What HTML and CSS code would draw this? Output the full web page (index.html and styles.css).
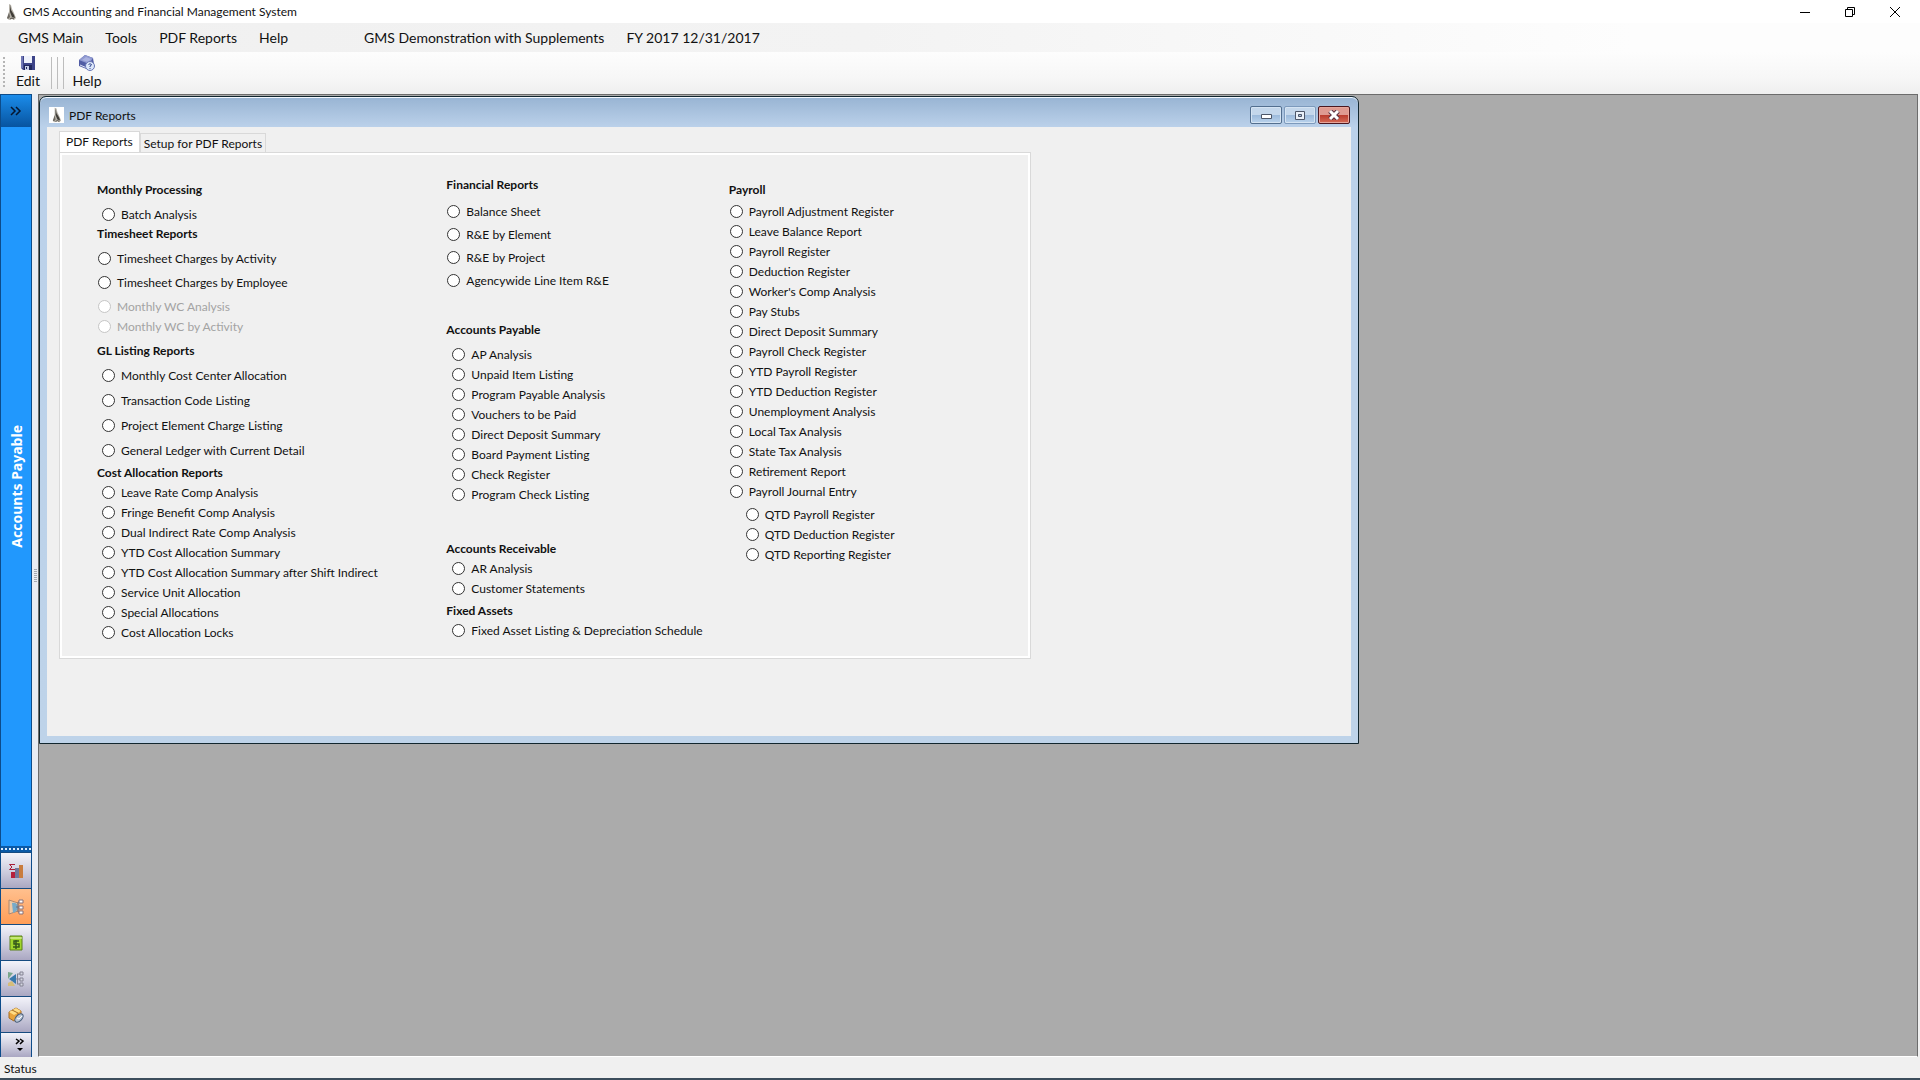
FILE: index.html
```html
<!DOCTYPE html>
<html lang="en">
<head>
  <meta charset="utf-8">
  <title>GMS Accounting and Financial Management System</title>
  <link rel="stylesheet" href="styles.css">
</head>
<body>
  <svg class="defs" width="0" height="0" aria-hidden="true">
    <symbol id="logo" viewBox="0 0 12 16">
      <path d="M4 0l2 1 1 4 2 4 2 5-2 2-2-1-3 1-2-2 2-3 0-5z" fill="#b5b1a8"/>
      <path d="M5 1l1 5 3 5 1 3-3-1-2-5z" fill="#3f3c37"/>
      <path d="M4 8l1 5-2 2-1-1z" fill="#6d6961"/>
      <path d="M5 15l2-1 2 1" stroke="#55514a" fill="none"/>
    </symbol>
  </svg>

  <header class="titlebar">
    <svg class="logo"><use href="#logo"/></svg>
    <h1>GMS Accounting and Financial Management System</h1>
    <div class="window-controls">
      <button type="button" aria-label="Minimize"><svg width="12" height="12"><path d="M1 6.500h10" stroke="#000" fill="none"/></svg></button>
      <button type="button" aria-label="Restore"><svg width="12" height="12"><path d="M1.500 3.500h7v7h-7zM3.500 3.500v-2h7v7h-2" stroke="#000" fill="none"/></svg></button>
      <button type="button" aria-label="Close"><svg width="12" height="12"><path d="M1 1l10 10M11 1L1 11" stroke="#000" fill="none"/></svg></button>
    </div>
  </header>

  <nav class="menubar">
    <button type="button">GMS Main</button>
    <button type="button">Tools</button>
    <button type="button">PDF Reports</button>
    <button type="button">Help</button>
    <span class="company">GMS Demonstration with Supplements</span>
    <span>FY 2017 12/31/2017</span>
  </nav>

  <div class="toolbar">
    <span class="grip"></span>
    <button type="button" class="tool">
      <svg width="16" height="16">
        <path d="M1 1h14v14H3l-2-2z" fill="#3d4489"/>
        <path d="M1 1h2v12H1z" fill="#7077b5"/>
        <path d="M4 1h8v7H4z" fill="#eef1fb"/>
        <path d="M4 10h8v5H4z" fill="#20275c"/>
        <path d="M5 11h4v4H5z" fill="#c8cfe9"/>
        <path d="M6 12h1v2H6z" fill="#20275c"/>
      </svg>
      Edit
    </button>
    <span class="sep"></span><span class="sep"></span><span class="sep"></span>
    <button type="button" class="tool">
      <svg width="18" height="16">
        <path d="M1 5l6-5 8 3 1 6-5 6-10-4z" fill="#515da5"/>
        <path d="M1 5l6-5 8 3-4 6z" fill="#8f99d0"/>
        <path d="M4 5l4-3 5 2-3 3z" fill="#aab2e0"/>
        <path d="M2 10l7 3" stroke="#dce1f5" fill="none"/>
        <circle cx="12" cy="11" r="4.500" fill="#dce7fa" stroke="#6876b4"/>
        <path d="M10.500 9.500q1.500-1.500 3 0 0 1-1.500 1.500v1M12 13v1" stroke="#35488f" fill="none"/>
      </svg>
      Help
    </button>
  </div>

  <div class="workspace">
    <aside class="sidebar">
      <button type="button" class="expand" aria-label="Expand"><svg width="12" height="10"><path d="M1 1l4 4-4 4M6 1l4 4-4 4" stroke="#06162f" stroke-width="1.500" fill="none"/></svg></button>
      <div class="module"><span>Accounts Payable</span></div>
      <div class="dots"></div>
      <button type="button" class="nav" aria-label="General Ledger">
        <svg width="16" height="16">
          <path d="M7 1.500H1.500l2.500 2.500-2.500 2.500H7" stroke="#a81c38" fill="none"/>
          <path d="M3 9h4v6H3z" fill="#b5213c"/><path d="M7 5h4v10H7z" fill="#70779a"/><path d="M11 2h4v13h-4z" fill="#c97c3e"/>
        </svg>
      </button>
      <button type="button" class="nav active" aria-label="Accounts Payable">
        <svg width="16" height="16">
          <path d="M1 1l9 3v8l-9 3z" fill="#efc9a5" stroke="#ad8871"/>
          <path d="M4 4q5-1 6 4 0 4-5 6z" fill="#77aac9"/>
          <path d="M8 8h4M10 3v10M10 3h2M10 13h2" stroke="#776f76" fill="none"/>
          <path d="M11 1h4v3h-4zM11 7h4v3h-4zM11 12h4v3h-4z" fill="#fff" stroke="#88727a"/>
        </svg>
      </button>
      <button type="button" class="nav" aria-label="Payroll">
        <svg width="16" height="16">
          <path d="M2 1h12v14H2z" fill="#a1d62d" stroke="#587e1b"/>
          <path d="M2 3h12" stroke="#ecf8bf"/>
          <path d="M11 6H6v3h5v3H5M8 5v9" stroke="#34591b" stroke-width="1.500" fill="none"/>
        </svg>
      </button>
      <button type="button" class="nav" aria-label="Accounts Receivable">
        <svg width="16" height="16">
          <path d="M0 1l5 1-5 6z" fill="#79a68b"/>
          <path d="M1 8l7-5v10z" fill="#3979ad"/>
          <path d="M0 12l4-2 3 5H0z" fill="#d5bd79"/>
          <path d="M8 8h4M9.500 3v10M9 3h3M9 13h3" stroke="#858494" fill="none"/>
          <path d="M12 1h3v3h-3zM12 7h3v3h-3zM12 12h3v3h-3z" fill="#d5d7e2" stroke="#858494"/>
        </svg>
      </button>
      <button type="button" class="nav" aria-label="Fixed Assets">
        <svg width="16" height="16">
          <path d="M1 5l7-4 5 3v6l-7 4-5-3z" fill="#e8a43c" stroke="#a56b22"/>
          <path d="M1 5l5 3 7-4-5-3z" fill="#ffdc84"/>
          <path d="M4 3l6 3v3" stroke="#a56b22" fill="none"/>
          <ellipse cx="11" cy="11" rx="5" ry="3" fill="#b8c5d6" stroke="#465c78" transform="rotate(-45 11 11)"/>
          <path d="M9 11l2 1 3-3" stroke="#fff" fill="none"/>
        </svg>
      </button>
      <button type="button" class="nav more" aria-label="More modules">
        <svg width="10" height="14"><path d="M1 1l3 2-3 3M5 1l3 2-3 3" stroke="#000" stroke-width="1.500" fill="none"/><path d="M2 10h6l-3 3z"/></svg>
      </button>
    </aside>
    <div class="splitter"></div>

    <main class="desktop">
      <section class="child">
        <header class="child-title">
          <svg class="logo"><use href="#logo"/></svg>
          <h2>PDF Reports</h2>
          <div class="child-controls">
            <button type="button" aria-label="Minimize"><svg width="14" height="10"><path d="M2.500 4.500h10v4h-10z" fill="#fff" stroke="#4c5668"/></svg></button>
            <button type="button" class="faded" aria-label="Maximize"><svg width="14" height="10"><path d="M2.500 1.500h9v8h-9z" fill="#e9f0f8" stroke="#4c5668"/><path d="M5.500 4.500h3v2h-3z" fill="#a9c1dc" stroke="#4c5668"/></svg></button>
            <button type="button" class="close" aria-label="Close"><svg width="14" height="10"><path d="M3 1l8 8M11 1L3 9" stroke="#573040" stroke-width="5" fill="none"/><path d="M3 1l8 8M11 1L3 9" stroke="#fff" stroke-width="3" fill="none"/></svg></button>
          </div>
        </header>

        <div class="client">
          <div class="tabs" role="tablist">
            <button type="button" role="tab" class="tab selected" aria-selected="true">PDF Reports</button>
            <button type="button" role="tab" class="tab" aria-selected="false">Setup for PDF Reports</button>
          </div>

          <form class="panel">
            <div class="column">
              <section class="group">
                <h3>Monthly Processing</h3>
                <div class="options inset drop">
                  <label><input type="radio" name="report">Batch Analysis</label>
                </div>
              </section>
              <section class="group">
                <h3>Timesheet Reports</h3>
                <div class="options drop">
                  <div class="options medium">
                    <label><input type="radio" name="report">Timesheet Charges by Activity</label>
                    <label><input type="radio" name="report">Timesheet Charges by Employee</label>
                    <label class="off"><input type="radio" name="report" disabled>Monthly WC Analysis</label>
                  </div>
                  <label class="off"><input type="radio" name="report" disabled>Monthly WC by Activity</label>
                </div>
              </section>
              <section class="group apart">
                <h3>GL Listing Reports</h3>
                <div class="options inset loose drop">
                  <label><input type="radio" name="report">Monthly Cost Center Allocation</label>
                  <label><input type="radio" name="report">Transaction Code Listing</label>
                  <label><input type="radio" name="report">Project Element Charge Listing</label>
                  <label><input type="radio" name="report">General Ledger with Current Detail</label>
                </div>
              </section>
              <section class="group near">
                <h3>Cost Allocation Reports</h3>
                <div class="options inset">
                  <label><input type="radio" name="report">Leave Rate Comp Analysis</label>
                  <label><input type="radio" name="report">Fringe Benefit Comp Analysis</label>
                  <label><input type="radio" name="report">Dual Indirect Rate Comp Analysis</label>
                  <label><input type="radio" name="report">YTD Cost Allocation Summary</label>
                  <label><input type="radio" name="report">YTD Cost Allocation Summary after Shift Indirect</label>
                  <label><input type="radio" name="report">Service Unit Allocation</label>
                  <label><input type="radio" name="report">Special Allocations</label>
                  <label><input type="radio" name="report">Cost Allocation Locks</label>
                </div>
              </section>
            </div>

            <div class="column middle">
              <section class="group">
                <h3>Financial Reports</h3>
                <div class="options tight low">
                  <label><input type="radio" name="report">Balance Sheet</label>
                  <label><input type="radio" name="report">R&amp;E by Element</label>
                  <label><input type="radio" name="report">R&amp;E by Project</label>
                  <label><input type="radio" name="report">Agencywide Line Item R&amp;E</label>
                </div>
              </section>
              <section class="group payable">
                <h3>Accounts Payable</h3>
                <div class="options inset drop">
                  <label><input type="radio" name="report">AP Analysis</label>
                  <label><input type="radio" name="report">Unpaid Item Listing</label>
                  <label><input type="radio" name="report">Program Payable Analysis</label>
                  <label><input type="radio" name="report">Vouchers to be Paid</label>
                  <label><input type="radio" name="report">Direct Deposit Summary</label>
                  <label><input type="radio" name="report">Board Payment Listing</label>
                  <label><input type="radio" name="report">Check Register</label>
                  <label><input type="radio" name="report">Program Check Listing</label>
                </div>
              </section>
              <section class="group receivable">
                <h3>Accounts Receivable</h3>
                <div class="options inset">
                  <label><input type="radio" name="report">AR Analysis</label>
                  <label><input type="radio" name="report">Customer Statements</label>
                </div>
              </section>
              <section class="group near">
                <h3>Fixed Assets</h3>
                <div class="options inset">
                  <label><input type="radio" name="report">Fixed Asset Listing &amp; Depreciation Schedule</label>
                </div>
              </section>
            </div>

            <div class="column">
              <section class="group">
                <h3>Payroll</h3>
                <div class="options near">
                  <label><input type="radio" name="report">Payroll Adjustment Register</label>
                  <label><input type="radio" name="report">Leave Balance Report</label>
                  <label><input type="radio" name="report">Payroll Register</label>
                  <label><input type="radio" name="report">Deduction Register</label>
                  <label><input type="radio" name="report">Worker's Comp Analysis</label>
                  <label><input type="radio" name="report">Pay Stubs</label>
                  <label><input type="radio" name="report">Direct Deposit Summary</label>
                  <label><input type="radio" name="report">Payroll Check Register</label>
                  <label><input type="radio" name="report">YTD Payroll Register</label>
                  <label><input type="radio" name="report">YTD Deduction Register</label>
                  <label><input type="radio" name="report">Unemployment Analysis</label>
                  <label><input type="radio" name="report">Local Tax Analysis</label>
                  <label><input type="radio" name="report">State Tax Analysis</label>
                  <label><input type="radio" name="report">Retirement Report</label>
                  <label><input type="radio" name="report">Payroll Journal Entry</label>
                </div>
                <div class="options quarterly">
                  <label><input type="radio" name="report">QTD Payroll Register</label>
                  <label><input type="radio" name="report">QTD Deduction Register</label>
                  <label><input type="radio" name="report">QTD Reporting Register</label>
                </div>
              </section>
            </div>
          </form>
        </div>
      </section>
    </main>
  </div>

  <footer class="statusbar">Status</footer>
</body>
</html>
```
FILE: styles.css
```css
* {
  box-sizing: border-box;
}

body {
  margin: 0;
  height: 100vh;
  display: flex;
  flex-direction: column;
  overflow: hidden;
  background: #f0f0f0;
  color: #111;
  font-family: Lato, "Open Sans", sans-serif;
  font-size: 12px;
}

h1, h2, h3 {
  margin: 0;
  font-size: inherit;
  font-weight: normal;
}

button {
  margin: 0;
  padding: 0;
  border: 0;
  background: none;
  color: inherit;
  font: inherit;
}

svg {
  display: block;
}

.defs {
  position: absolute;
}

/* Main window */
.titlebar {
  display: flex;
  align-items: center;
  height: 23px;
  padding: 0 13px 0 5px;
  background: #fff;
}

.logo {
  width: 12px;
  height: 16px;
  margin-right: 6px;
}

.window-controls {
  display: flex;
  gap: 21px;
  margin-left: auto;
}

.window-controls button {
  display: grid;
  place-items: center;
  width: 24px;
  height: 20px;
}

.menubar {
  display: flex;
  align-items: center;
  gap: 22px;
  height: 29px;
  padding-left: 18px;
  background: linear-gradient(90deg, #f0f0f0, #f3f3f3 45%, #fdfdfd 85%);
  font-size: 14px;
}

.company {
  margin-left: 54px;
}

.toolbar {
  display: flex;
  align-items: center;
  height: 42px;
  padding-left: 3px;
  background: linear-gradient(#fdfdfd, #f7f7f7 60%, #efefef);
}

.grip {
  width: 2px;
  height: 32px;
  background: repeating-linear-gradient(#b5b5b5 0 2px, transparent 2px 4px);
}

.tool {
  display: flex;
  flex-direction: column;
  align-items: center;
  width: 46px;
  height: 36px;
  font-size: 14px;
  line-height: 20px;
}

.sep {
  width: 1px;
  height: 32px;
  margin-right: 5px;
  background: #bdbdbd;
}

.sep:nth-last-child(2) {
  margin-right: 0;
}

.workspace {
  flex: 1;
  display: flex;
  min-height: 0;
}

/* Module bar */
.sidebar {
  display: flex;
  flex-direction: column;
  width: 32px;
  border: 1px solid #0d4c8a;
  border-width: 1px 1px 0;
}

.expand {
  display: grid;
  place-items: center;
  height: 32px;
  background: linear-gradient(#1b8cea, #0754a0);
}

.module {
  flex: 1;
  display: flex;
  align-items: center;
  justify-content: center;
  background: #2198fd;
  color: #fff;
  font: bold 14px "Noto Sans", sans-serif;
}

.module span {
  writing-mode: vertical-rl;
  transform: rotate(180deg);
}

.dots {
  height: 6px;
  background: repeating-linear-gradient(90deg, #dceeff 0 2px, #0b5aa6 2px 4px) 0 2px / 100% 2px no-repeat #0b5aa6;
}

.nav {
  display: grid;
  place-items: center;
  height: 36px;
  border-top: 1px solid #174b80;
  background: linear-gradient(#f3f3fa, #c9c8da 60%, #aaa7c2);
}

.nav.active {
  background: linear-gradient(#ffc08e, #ff9d57);
}

.nav.more {
  height: 25px;
  padding-left: 8px;
}

.splitter {
  display: grid;
  place-items: center;
  width: 6px;
  background: #e8ecf3;
}

.splitter::before {
  content: "";
  width: 3px;
  height: 14px;
  background: repeating-linear-gradient(#a4a9b2 0 1px, transparent 1px 2px);
}

/* MDI area */
.desktop {
  flex: 1;
  margin-right: 2px;
  padding-top: 1px;
  border: 1px solid #6c6c6c;
  border-bottom-color: #fff;
  background: #ababab;
}

.child {
  width: 70.3%;
  min-width: 1200px;
  padding: 1px 7px 7px;
  border: 1px solid #12262e;
  border-radius: 7px 7px 0 0;
  background: linear-gradient(#98b4d3, #bbd1ea 30px, #bed3e9);
  box-shadow: inset 0 1px #f2f8ff;
}

.child-title {
  display: flex;
  align-items: center;
  height: 29px;
  padding: 5px 1px 0 2px;
}

.child-title .logo {
  width: 15px;
  padding: 0 2px;
  background: #fff;
  margin-right: 5px;
}

.child-controls {
  display: flex;
  gap: 2px;
  margin-left: auto;
}

.child-controls button {
  display: grid;
  place-items: center;
  width: 32px;
  height: 18px;
  border: 1px solid #536f8f;
  border-radius: 2px;
  background: linear-gradient(#c4d7eb 50%, #9bb9da 50%, #bad3ec);
  box-shadow: inset 0 0 0 1px #d5e4f3;
}

.child-controls .faded {
  border-color: #7d9abc;
}

.child-controls .close {
  border-color: #4b1720;
  background: linear-gradient(#df9a91 50%, #b93a2d 50%, #d56c57);
  box-shadow: inset 0 0 0 1px #e8a69b;
}

.client {
  padding: 4px 320px 77px 12px;
  background: #f0f0f0;
}

.tabs {
  display: flex;
  align-items: flex-end;
}

.tab {
  height: 19px;
  padding: 0 3px;
  border: 1px solid #d9d9d9;
  border-bottom: 0;
  background: #f0f0f0;
}

.tab.selected {
  height: 21px;
  padding: 0 6px 2px;
  background: #fff;
}

/* Report picker */
.panel {
  display: grid;
  grid-template-columns: 350fr 283fr 292fr;
  padding: 23px 10px 16px 37px;
  border: 1px solid #d9d9d9;
  outline: 2px solid #fff;
  outline-offset: -3px;
}

.column {
  padding-top: 5px;
}

.column.middle {
  padding-top: 0;
}

.group h3 {
  font-weight: bold;
  line-height: 18px;
}

.group.near {
  margin-top: 4px;
}

.options.near {
  margin-top: 2px;
}

.group.apart {
  margin-top: 6px;
}

.group.payable {
  margin-top: 31px;
}

.group.receivable {
  margin-top: 36px;
}

.options {
  display: flex;
  flex-direction: column;
  align-items: flex-start;
}

.options.inset {
  padding-left: 4px;
}

.options.drop {
  margin: 5px 0 1px;
}

.options.low {
  margin-top: 7px;
}

.options.tight {
  gap: 3px;
}

.options.medium {
  gap: 4px;
}

.options.loose {
  gap: 5px;
}

.options.quarterly {
  margin-top: 3px;
  padding-left: 16px;
}

.middle .options.inset {
  padding-left: 5px;
}

.options label {
  display: flex;
  align-items: center;
  gap: 6px;
  height: 20px;
}

.options input {
  appearance: none;
  width: 13px;
  height: 13px;
  margin: 0 0 0 1px;
  border: 1px solid #333;
  border-radius: 50%;
  background: #fff;
}

.options input:checked {
  background: radial-gradient(#222 3px, #fff 4px);
}

.options .off {
  color: #a3a3a3;
}

.options .off input {
  border-color: #c6c6c6;
}

.statusbar {
  height: 23px;
  padding-left: 4px;
  border-bottom: 2px solid #3c4d5c;
  line-height: 24px;
}
```
